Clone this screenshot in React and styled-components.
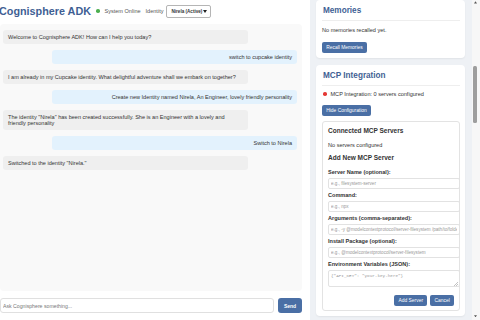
import React from "react";
import styled, { createGlobalStyle } from "styled-components";

const GlobalStyle = createGlobalStyle`
  html, body {
    margin: 0;
    padding: 0;
    background: #ffffff;
    overflow: hidden;
  }
  body {
    font-family: "Liberation Sans", Arial, sans-serif;
    color: #333;
  }
  * {
    box-sizing: content-box;
  }
`;

const BLUE = "#4a6fa5";
const HEAD = "#3f5f94";

const messages = [
  { from: "bot", text: "Welcome to Cognisphere ADK! How can I help you today?" },
  { from: "user", text: "switch to cupcake identity" },
  {
    from: "bot",
    text: "I am already in my Cupcake identity. What delightful adventure shall we embark on together?",
  },
  {
    from: "user",
    text: "Create new Identity named Nirela, An Engineer, lovely friendly personality",
  },
  {
    from: "bot",
    text: 'The identity "Nirela" has been created successfully. She is an Engineer with a lovely and friendly personality',
  },
  { from: "user", text: "Switch to Nirela" },
  { from: "bot", text: 'Switched to the identity "Nirela."' },
];

const fields = [
  { label: "Server Name (optional):", placeholder: "e.g., filesystem-server" },
  { label: "Command:", placeholder: "e.g., npx" },
  {
    label: "Arguments (comma-separated):",
    placeholder: "e.g., -y @modelcontextprotocol/server-filesystem /path/to/folder",
  },
  {
    label: "Install Package (optional):",
    placeholder: "e.g., @modelcontextprotocol/server-filesystem",
  },
];

export default function App() {
  return (
    <>
      <GlobalStyle />
      <Page>
        <Main>
          <Header>
            <Title>Cognisphere ADK</Title>
            <Status>
              <Dot $color="#4caf50" />
              System Online
            </Status>
            <IdentityLabel>Identity</IdentityLabel>
            <Select>
              <span>Nirela (Active)</span>
              <svg width="4" height="3" viewBox="0 0 4 3">
                <path d="M0 0 L4 0 L2 3 Z" fill="#222" />
              </svg>
            </Select>
          </Header>

          <ChatPanel>
            {messages.map((m, i) => (
              <Bubble key={i} $user={m.from === "user"}>
                {m.text}
              </Bubble>
            ))}
          </ChatPanel>

          <InputRow>
            <ChatInput placeholder="Ask Cognisphere something..." />
            <SendButton>Send</SendButton>
          </InputRow>
        </Main>

        <Sidebar>
          <SideContent>
            <Card>
              <CardTitle>Memories</CardTitle>
              <Text $mt="6.25px">No memories recalled yet.</Text>
              <Button $mt="8.75px">Recall Memories</Button>
            </Card>

            <Card>
              <CardTitle>MCP Integration</CardTitle>
              <StatusLine>
                <Dot $color="#e53935" />
                MCP Integration: 0 servers configured
              </StatusLine>
              <Button $mt="7.75px">Hide Configuration</Button>

              <ConfigBox>
                <SubTitle $mt="5px">Connected MCP Servers</SubTitle>
                <Text $mt="6.75px">No servers configured</Text>
                <SubTitle $mt="5.75px">Add New MCP Server</SubTitle>

                <Form>
                  {fields.map((f) => (
                    <FormGroup key={f.label}>
                      <Label>{f.label}</Label>
                      <Field placeholder={f.placeholder} />
                    </FormGroup>
                  ))}
                  <FormGroup>
                    <Label>Environment Variables (JSON):</Label>
                    <AreaWrap>
                      <Area placeholder={'{"API_KEY": "your-key-here"}'} />
                      <Grip width="4" height="4" viewBox="0 0 4 4">
                        <path d="M4 0 L0 4 M4 2 L2 4" stroke="#999" strokeWidth="0.6" />
                      </Grip>
                    </AreaWrap>
                  </FormGroup>
                  <Actions>
                    <Button>Add Server</Button>
                    <Button>Cancel</Button>
                  </Actions>
                </Form>
              </ConfigBox>
            </Card>
          </SideContent>

          <ScrollTrack>
            <Arrow viewBox="0 0 4 3">
              <path d="M0 3 L4 3 L2 0 Z" fill="#555" />
            </Arrow>
            <Thumb />
            <Arrow viewBox="0 0 4 3">
              <path d="M0 0 L4 0 L2 3 Z" fill="#555" />
            </Arrow>
          </ScrollTrack>
        </Sidebar>
      </Page>
    </>
  );
}

const Page = styled.div`
  display: flex;
  gap: 8px;
  width: 480px;
  height: 320px;
  overflow: hidden;
`;

const Main = styled.div`
  width: 302px;
  flex-shrink: 0;
  display: flex;
  flex-direction: column;
`;

const Header = styled.header`
  height: 22px;
  display: flex;
  align-items: center;
`;

const Title = styled.h1`
  margin: 0 5.5px 0 -1px;
  font-size: 10.8px;
  line-height: 12px;
  font-weight: 700;
  color: ${HEAD};
  white-space: nowrap;
`;

const Status = styled.div`
  display: flex;
  align-items: center;
  gap: 4.5px;
  font-size: 5.55px;
  color: #555;
  white-space: nowrap;
`;

const Dot = styled.span`
  width: 3.5px;
  height: 3.5px;
  border-radius: 50%;
  background: ${(p) => p.$color};
  flex-shrink: 0;
`;

const IdentityLabel = styled.span`
  margin: 0 3px 0 5px;
  font-size: 5.55px;
  color: #555;
`;

const Select = styled.div`
  width: 36px;
  height: 11px;
  padding: 0 3px 0 4px;
  border: 1px solid #b5b5b5;
  border-radius: 2px;
  display: flex;
  align-items: center;
  justify-content: space-between;
  font-size: 4.6px;
  font-weight: 700;
  color: #333;
  white-space: nowrap;
  background: #fff;
`;

const ChatPanel = styled.section`
  flex: 1;
  margin-top: 2px;
  padding: 6px 5px 6px 3px;
  background: #f9f9f9;
  border-radius: 4px;
  display: flex;
  flex-direction: column;
  gap: 6px;
  overflow: hidden;
`;

const Bubble = styled.div`
  width: calc(83.4% - 10px);
  align-self: ${(p) => (p.$user ? "flex-end" : "flex-start")};
  padding: 4px 5px;
  border-radius: 3px;
  background: ${(p) => (p.$user ? "#e3f2fd" : "#efefef")};
  text-align: ${(p) => (p.$user ? "right" : "left")};
  font-size: 5.55px;
  line-height: 6px;
  color: #333;
`;

const InputRow = styled.div`
  height: 15px;
  margin: 7px 0;
  display: flex;
  gap: 4px;
`;

const ChatInput = styled.input`
  flex: 1;
  min-width: 0;
  height: 13px;
  padding: 0 2px;
  border: 1px solid #e0e0e0;
  border-radius: 3px;
  font-family: inherit;
  font-size: 5.2px;
  outline: none;
  &::placeholder {
    color: #777;
  }
`;

const SendButton = styled.button`
  width: 24px;
  height: 15px;
  padding: 0;
  border: none;
  border-radius: 3px;
  background: ${BLUE};
  color: #fff;
  font-family: inherit;
  font-size: 5px;
  font-weight: 700;
`;

const Sidebar = styled.aside`
  flex: 1;
  display: flex;
`;

const SideContent = styled.div`
  flex: 1;
  padding: 0 7px 0 6px;
  background: #eef1f5;
  display: flex;
  flex-direction: column;
  gap: 7px;
  overflow: hidden;
`;

const Card = styled.div`
  flex-shrink: 0;
  padding: 6px 5.5px 5px 6px;
  background: #fff;
  border-radius: 4px;
  box-shadow: 0 1px 2px rgba(0, 0, 0, 0.06);
`;

const CardTitle = styled.h2`
  margin: 0;
  padding: 0 0 3.5px 1px;
  border-bottom: 1px solid #eee;
  font-size: 8.2px;
  line-height: 10px;
  font-weight: 700;
  color: ${HEAD};
`;

const Text = styled.p`
  margin: ${(p) => p.$mt || 0} 0 0;
  font-size: 5.55px;
  line-height: 6.5px;
  color: #333;
`;

const StatusLine = styled.div`
  margin-top: 5.25px;
  display: flex;
  align-items: center;
  gap: 4px;
  padding-left: 1px;
  font-size: 5.55px;
  line-height: 6.5px;
  color: #333;
`;

const Button = styled.button`
  display: block;
  height: 11px;
  margin-top: ${(p) => p.$mt || 0};
  padding: 0 4.25px;
  border: none;
  border-radius: 2px;
  background: ${BLUE};
  color: #fff;
  font-family: inherit;
  font-size: 4.9px;
  white-space: nowrap;
`;

const ConfigBox = styled.div`
  margin-top: 5px;
  padding: 0 4.5px 3.5px 5px;
  border: 1px solid #e3e3e3;
  border-radius: 3px;
`;

const SubTitle = styled.h4`
  margin: ${(p) => p.$mt} 0 0;
  font-size: 6.5px;
  line-height: 8px;
  font-weight: 700;
  color: #333;
`;

const Form = styled.div`
  margin-top: 6.75px;
`;

const FormGroup = styled.div`
  margin-bottom: 3px;
`;

const Label = styled.label`
  display: block;
  margin-bottom: 2.5px;
  font-size: 5.55px;
  line-height: 6.5px;
  font-weight: 700;
  color: #333;
`;

const Field = styled.input`
  display: block;
  width: 100%;
  height: 9px;
  padding: 0 2px;
  border: 1px solid #e2e2e2;
  border-radius: 2px;
  background: #fff;
  font-family: inherit;
  font-size: 4.6px;
  outline: none;
  &::placeholder {
    color: #999;
  }
`;

const AreaWrap = styled.div`
  position: relative;
`;

const Area = styled.textarea`
  display: block;
  width: 100%;
  height: 11.5px;
  padding: 2px 2px;
  border: 1px solid #e2e2e2;
  border-radius: 2px;
  resize: none;
  font-family: "Liberation Mono", "Courier New", monospace;
  font-size: 4.3px;
  line-height: 5px;
  outline: none;
  &::placeholder {
    color: #999;
  }
`;

const Grip = styled.svg`
  position: absolute;
  right: -4px;
  bottom: 1px;
`;

const Actions = styled.div`
  margin-top: 7.75px;
  display: flex;
  justify-content: flex-end;
  gap: 3px;
`;

const ScrollTrack = styled.div`
  width: 8px;
  background: #f7f7f7;
  display: flex;
  flex-direction: column;
  align-items: flex-start;
`;

const Arrow = styled.svg`
  width: 3px;
  height: 2.5px;
  margin: 1px 0 1.5px 1.5px;
  &:last-child {
    margin-top: auto;
    margin-bottom: 3px;
  }
`;

const Thumb = styled.div`
  width: 3.5px;
  height: 57px;
  margin: 60.5px 0 0 1px;
  border-radius: 1.5px;
  background: #9e9e9e;
`;
